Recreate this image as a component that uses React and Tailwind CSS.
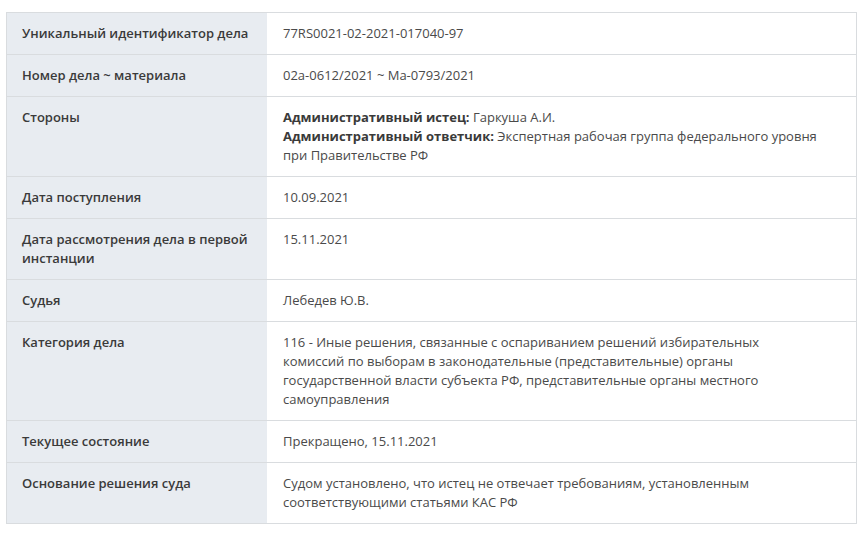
import React from "react";

const rows = [
  { label: "Уникальный идентификатор дела", value: "77RS0021-02-2021-017040-97" },
  { label: "Номер дела ~ материала", value: "02а-0612/2021 ~ Ма-0793/2021" },
  {
    label: "Стороны",
    value: (
      <>
        <div>
          <span className="font-bold text-[#3a3a3a]">Административный истец:</span> Гаркуша А.И.
        </div>
        <div>
          <span className="font-bold text-[#3a3a3a]">Административный ответчик:</span> Экспертная рабочая группа федерального уровня
          <br />
          при Правительстве РФ
        </div>
      </>
    ),
  },
  { label: "Дата поступления", value: "10.09.2021" },
  { label: "Дата рассмотрения дела в первой инстанции", value: "15.11.2021" },
  { label: "Судья", value: "Лебедев Ю.В." },
  {
    label: "Категория дела",
    value:
      "116 - Иные решения, связанные с оспариванием решений избирательных комиссий по выборам в законодательные (представительные) органы государственной власти субъекта РФ, представительные органы местного самоуправления",
  },
  { label: "Текущее состояние", value: "Прекращено, 15.11.2021" },
  {
    label: "Основание решения суда",
    value: "Судом установлено, что истец не отвечает требованиям, установленным соответствующими статьями КАС РФ",
  },
];

export default function App() {
  return (
    <div className="w-[868px] h-[541px] bg-white pt-[12px] pl-[6px]" style={{ fontFamily: '"Open Sans", "Noto Sans", sans-serif' }}>
      <div className="w-[851px] border border-[#d9dcdf] text-[13px] leading-[19px]">
        {rows.map((r, i) => (
          <div key={i} className={`grid grid-cols-[260px_1fr] ${i > 0 ? "border-t border-[#d9dcdf]" : ""}`}>
            <div className="bg-[#e8ecf1] pl-[15px] pr-[10px] pt-[11px] pb-[11px] font-semibold text-[#3a3a3a]">
              {r.label}
            </div>
            <div className="pl-[16px] pr-[30px] pt-[11px] pb-[11px] text-[#4a4a4a]">
              {typeof r.value === "string" ? <div className="max-w-[480px]">{r.value}</div> : r.value}
            </div>
          </div>
        ))}
      </div>
    </div>
  );
}
